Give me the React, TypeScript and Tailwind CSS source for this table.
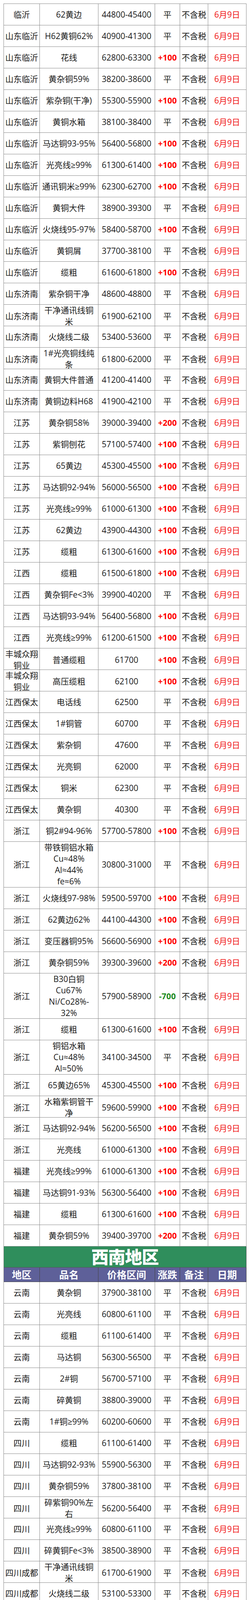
type Row = [string, string, string, string, number?]

const part1: Row[] = [
  ['临沂', '62黄边', '44800-45400', '平'],
  ['山东临沂', 'H62黄铜62%', '40900-41300', '平'],
  ['山东临沂', '花线', '62800-63300', '+100'],
  ['山东临沂', '黄杂铜59%', '38200-38600', '平'],
  ['山东临沂', '紫杂铜(干净)', '55300-55900', '+100'],
  ['山东临沂', '黄铜水箱', '38100-38400', '平'],
  ['山东临沂', '马达铜93-95%', '56400-56800', '+100'],
  ['山东临沂', '光亮线≥99%', '61300-61400', '+100'],
  ['山东临沂', '通讯铜米≥99%', '62300-62700', '+100'],
  ['山东临沂', '黄铜大件', '38900-39300', '平'],
  ['山东临沂', '火烧线95-97%', '58400-58700', '+100'],
  ['山东临沂', '黄铜屑', '37700-38100', '平'],
  ['山东临沂', '缆粗', '61600-61800', '+100'],
  ['山东济南', '紫杂铜干净', '48600-48800', '平'],
  ['山东济南', '干净通讯线铜\n米', '61900-62100', '平'],
  ['山东济南', '火烧线二级', '53400-53600', '平'],
  ['山东济南', '1#光亮铜线纯\n条', '61800-62000', '平'],
  ['山东济南', '黄铜大件普通', '41200-41400', '平'],
  ['山东济南', '黄铜边料H68', '41900-42100', '平'],
  ['江苏', '黄杂铜58%', '39000-39400', '+200'],
  ['江苏', '紫铜刨花', '57100-57400', '+100'],
  ['江苏', '65黄边', '45300-45500', '+100'],
  ['江苏', '马达铜92-94%', '56000-56500', '+100'],
  ['江苏', '光亮线≥99%', '61000-61300', '+100'],
  ['江苏', '62黄边', '43900-44300', '+100'],
  ['江苏', '缆粗', '61300-61600', '+100'],
  ['江西', '缆粗', '61500-61800', '+100'],
  ['江西', '黄杂铜Fe<3%', '39900-40200', '平'],
  ['江西', '马达铜93-94%', '56400-56800', '+100'],
  ['江西', '光亮线≥99%', '61200-61500', '+100'],
  ['丰城众翔\n铜业', '普通缆粗', '61700', '+100'],
  ['丰城众翔\n铜业', '高压缆粗', '62100', '+100'],
  ['江西保太', '电话线', '62500', '平'],
  ['江西保太', '1#铜管', '60700', '平'],
  ['江西保太', '紫杂铜', '47600', '平'],
  ['江西保太', '光亮铜', '62000', '平'],
  ['江西保太', '铜米', '62300', '平'],
  ['江西保太', '黄杂铜', '40300', '平'],
  ['浙江', '铜2#94-96%', '57700-57800', '+100'],
  ['浙江', '带铁铜铝水箱\nCu≈48%\nAl≈44%\nfe≈6%', '30800-31000', '平', 117],
  ['浙江', '火烧线97-98%', '59500-59700', '+100'],
  ['浙江', '62黄边62%', '44100-44300', '+100'],
  ['浙江', '变压器铜95%', '56600-56900', '+100'],
  ['浙江', '黄杂铜59%', '39300-39600', '+200'],
  ['浙江', 'B30白铜\nCu67%\nNi/Co28%-\n32%', '57900-58900', '-700', 116],
  ['浙江', '缆粗', '61300-61600', '+100'],
  ['浙江', '铜铝水箱\nCu≈48%\nAl≈50%', '34100-34500', '平', 88],
  ['浙江', '65黄边65%', '45300-45500', '+100'],
  ['浙江', '水箱紫铜管干\n净', '59600-59900', '+100'],
  ['浙江', '马达铜92-94%', '56200-56500', '+100'],
  ['浙江', '光亮线', '61000-61300', '+100'],
  ['福建', '光亮线≥99%', '61000-61300', '+100'],
  ['福建', '马达铜91-93%', '56300-56400', '+100'],
  ['福建', '缆粗', '61300-61600', '+100'],
  ['福建', '黄杂铜59%', '39400-39700', '+200'],
]

const part2: Row[] = [
  ['云南', '黄杂铜', '37900-38100', '平'],
  ['云南', '光亮线', '60800-61100', '平'],
  ['云南', '缆粗', '61100-61400', '平'],
  ['云南', '马达铜', '56300-56500', '平'],
  ['云南', '2#铜', '56700-57100', '平'],
  ['云南', '碎黄铜', '38800-39000', '平'],
  ['云南', '1#铜≥99%', '60200-60600', '平'],
  ['四川', '缆粗', '61100-61400', '平'],
  ['四川', '马达铜92-93%', '55900-56300', '平'],
  ['四川', '黄杂铜59%', '37800-38100', '平'],
  ['四川', '碎紫铜90%左\n右', '56200-56400', '平'],
  ['四川', '光亮线≥99%', '60800-61100', '平'],
  ['四川', '碎黄铜Fe<3%', '38500-38900', '平'],
  ['四川成都', '干净通讯线铜\n米', '61700-61900', '平'],
  ['四川成都', '火烧线二级', '53100-53300', '平'],
  ['四川成都', '特紫铜', '60300-60500', '平'],
  ['四川成都', '电机线一级', '54900-55100', '平'],
  ['四川成都', '黄铜大件普通', '41000-41200', '平'],
  ['四川成都', '黄铜水箱常规', '38500-38700', '平'],
  ['贵州', '马达铜92-94%', '55900-56300', '平'],
  ['贵州', '光亮线≥99%', '60500-60900', '平'],
  ['贵州', '黄杂铜58%', '38100-38300', '平'],
  ['贵州', '缆粗', '60900-61200', '平'],
  ['贵州', '漆包线91-92%', '56000-56300', '平'],
  ['贵州', '带铁铜铝水箱\nCu≈45%\nAl≈43%\nFE≈10%', '31600-32000', '平', 116],
  ['重庆', '光亮线≥99%', '61000-61200', '平'],
  ['重庆', '漆包线≥90%', '55700-56000', '平'],
  ['重庆', '缆粗', '61100-61300', '平'],
  ['重庆', '铜铝水箱\nCu≈48%\nAl≈50%', '34400-34700', '平', 88],
  ['重庆', '电机线92-93%', '56700-57000', '平'],
  ['重庆', '黄杂铜58%', '37900-38200', '平'],
]

const part3: Row[] = [
  ['河南', '马达铜92-93%', '56500-56600', '平'],
  ['河南', '缆粗', '61400-61700', '平'],
  ['河南长葛', '火烧线95-96%', '57600-57900', '平'],
  ['河南长葛', '碎紫铜90%左\n右', '55900-56200', '平'],
  ['河南长葛', '黄杂铜59%', '38200-38300', '平'],
  ['河南长葛', '光亮线≥99%', '61100-61400', '平'],
  ['河南新昌', '缆粗', '62000', '+200'],
  ['河南新昌\n铜业', '普光亮', '61700', '+200'],
  ['湖北', '黄铜水箱', '35900-36100', '平'],
  ['湖北', 'H63黄铜', '45100-45300', '平'],
  ['湖北', '黄铜大件', '38900-39100', '平'],
  ['湖北', '碎黄铜', '38700-38800', '平'],
  ['湖北', '马达铜85-87%', '56000-56300', '平'],
  ['湖北', '花线', '62100-62600', '平'],
  ['湖北', '光亮线', '61100-61400', '平'],
  ['湖北恒昌\n电工', '缆粗', '62000', '+200'],
  ['湖北恒昌\n电工', '光亮铜', '61700', '+200'],
  ['湖南', '缆粗', '61400-61700', '平'],
  ['湖南', '漆包线', '56300-56600', '平'],
  ['汨罗', '黄杂铜Fe<3%', '38100-38200', '平'],
  ['汨罗', '空调铜管', '60300-60800', '平'],
  ['汨罗', '马达铜91-93%', '56000-56300', '平'],
  ['汨罗', '碎黄铜', '38800-39100', '平'],
  ['汨罗', '紫铜屑', '44500-44700', '平'],
  ['汨罗', '镀白紫铜板', '60500-61000', '平'],
  ['汨罗', '光亮线≥99%', '61100-61400', '平'],
  ['湖南金龙\n铜业', '光亮铜', '61500', '平'],
]

const heights: Record<number, string> = {
  55: 'h-[55px]',
  88: 'h-[88px]',
  116: 'h-[116px]',
  117: 'h-[117px]',
}

const grid = 'grid grid-cols-[92px_150px_145px_64px_72px_98px]'
const cell = 'flex items-center justify-center text-center whitespace-pre leading-[29px] border-r border-[#8a8a8a]'

function Change({ v }: { v: string }) {
  if (v.startsWith('+')) return <span className="font-bold text-[#ff0000]">{v}</span>
  if (v.startsWith('-')) return <span className="font-bold text-[#1c8a1c]">{v}</span>
  return <span>{v}</span>
}

function DataRow({ r }: { r: Row }) {
  const h = heights[r[4] ?? 55]
  return (
    <div className={`${grid} ${h} border-b border-[#8a8a8a]`}>
      <div className={cell}>{r[0]}</div>
      <div className={cell}>{r[1]}</div>
      <div className={cell}>{r[2]}</div>
      <div className={cell}>
        <Change v={r[3]} />
      </div>
      <div className={cell}>不含税</div>
      <div className={`${cell} text-[#f01414]`}>6月9日</div>
    </div>
  )
}

function Section({ title }: { title: string }) {
  return (
    <>
      <div className="h-[54px] bg-[#2f8e5c] border-r border-b border-[#555] flex items-center justify-center">
        <span className="text-white font-black text-[44px] leading-none tracking-[-1px]">{title}</span>
      </div>
      <div className={`${grid} h-[37px] bg-[#5e6099] border-b border-[#444] text-white font-bold text-[25px]`}>
        {['地区', '品名', '价格区间', '涨跌', '备注', '日期'].map((t) => (
          <div key={t} className="flex items-center justify-center border-r border-[#444] leading-none whitespace-nowrap">
            {t}
          </div>
        ))}
      </div>
    </>
  )
}

export default function App() {
  return (
    <div className="w-[640px] h-[6668px] overflow-hidden bg-white pt-[9px] font-['Open_Sans','Noto_Sans_CJK_SC',sans-serif] text-[21px] text-[#1a1a1a]">
      <div className="ml-[9px] w-[622px] border-l border-t border-[#8a8a8a]">
        {part1.map((r, i) => (
          <DataRow key={'a' + i} r={r} />
        ))}
        <Section title="西南地区" />
        {part2.map((r, i) => (
          <DataRow key={'b' + i} r={r} />
        ))}
        <Section title="华中地区" />
        {part3.map((r, i) => (
          <DataRow key={'c' + i} r={r} />
        ))}
      </div>
    </div>
  )
}
